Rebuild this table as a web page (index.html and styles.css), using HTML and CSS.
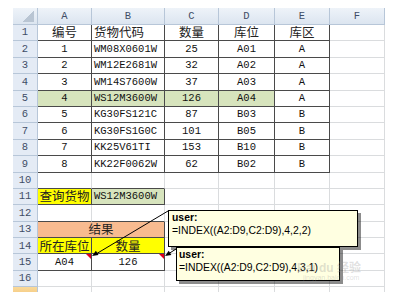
FILE: index.html
```html
<!DOCTYPE html>
<html lang="zh">
<head>
<meta charset="utf-8">
<title>INDEX</title>
<link rel="stylesheet" href="styles.css">
</head>
<body>
<div class="sheet">
  <div class="corner"></div>
  <div class="ch">A</div><div class="ch">B</div><div class="ch">C</div><div class="ch">D</div><div class="ch">E</div><div class="ch">F</div>

  <div class="rh">1</div>
  <div class="c b zh">编号</div><div class="c b zh l">货物代码</div><div class="c b zh">数量</div><div class="c b zh">库位</div><div class="c b zh">库区</div><div class="c"></div>

  <div class="rh">2</div>
  <div class="c b">1</div><div class="c b l">WM08X0601W</div><div class="c b">25</div><div class="c b">A01</div><div class="c b">A</div><div class="c"></div>

  <div class="rh">3</div>
  <div class="c b">2</div><div class="c b l">WM12E2681W</div><div class="c b">32</div><div class="c b">A02</div><div class="c b">A</div><div class="c"></div>

  <div class="rh">4</div>
  <div class="c b">3</div><div class="c b l">WM14S7600W</div><div class="c b">37</div><div class="c b">A03</div><div class="c b">A</div><div class="c"></div>

  <div class="rh">5</div>
  <div class="c b g">4</div><div class="c b g l">WS12M3600W</div><div class="c b g">126</div><div class="c b g">A04</div><div class="c b">A</div><div class="c"></div>

  <div class="rh">6</div>
  <div class="c b">5</div><div class="c b l">KG30FS121C</div><div class="c b">87</div><div class="c b">B03</div><div class="c b">B</div><div class="c"></div>

  <div class="rh">7</div>
  <div class="c b">6</div><div class="c b l">KG30FS1G0C</div><div class="c b">101</div><div class="c b">B05</div><div class="c b">B</div><div class="c"></div>

  <div class="rh">8</div>
  <div class="c b">7</div><div class="c b l">KK25V61TI</div><div class="c b">153</div><div class="c b">B10</div><div class="c b">B</div><div class="c"></div>

  <div class="rh">9</div>
  <div class="c b">8</div><div class="c b l">KK22F0062W</div><div class="c b">62</div><div class="c b">B02</div><div class="c b">B</div><div class="c"></div>

  <div class="rh">10</div>
  <div class="c bb"></div><div class="c bb"></div><div class="c"></div><div class="c"></div><div class="c"></div><div class="c"></div>

  <div class="rh">11</div>
  <div class="c b y zh">查询货物</div><div class="c b g l">WS12M3600W</div><div class="c"></div><div class="c"></div><div class="c"></div><div class="c"></div>

  <div class="rh">12</div>
  <div class="c bb"></div><div class="c bb"></div><div class="c"></div><div class="c"></div><div class="c"></div><div class="c"></div>

  <div class="rh">13</div>
  <div class="c b o zh span2">结果</div><div class="c"></div><div class="c"></div><div class="c"></div><div class="c"></div>

  <div class="rh">14</div>
  <div class="c b y zh">所在库位</div><div class="c b y zh">数量</div><div class="c"></div><div class="c"></div><div class="c"></div><div class="c"></div>

  <div class="rh">15</div>
  <div class="c b note">A04</div><div class="c b note">126</div><div class="c"></div><div class="c"></div><div class="c"></div><div class="c"></div>

  <div class="rh">16</div>
  <div class="c"></div><div class="c"></div><div class="c"></div><div class="c"></div><div class="c"></div><div class="c"></div>

  <div class="rh active"></div>
  <div class="c"></div><div class="c"></div><div class="c"></div><div class="c"></div><div class="c"></div><div class="c"></div>
</div>

<svg class="leaders" width="420" height="292" viewBox="0 0 420 292">
  <line x1="168" y1="211" x2="96" y2="254" stroke="#000" stroke-width="1"/>
  <polygon points="92,256 98.5,255 95.9,250.8" fill="#000"/>
  <line x1="176" y1="249" x2="169" y2="253.5" stroke="#000" stroke-width="1"/>
  <polygon points="165,256 171.4,254.9 168.7,250.7" fill="#000"/>
</svg>

<div class="comment c1">
  <div class="author">user:</div>
  <div>=INDEX((A2:D9,C2:D9),4,2,2)</div>
</div>
<div class="comment c2">
  <div class="author">user:</div>
  <div>=INDEX((A2:D9,C2:D9),4,3,1)</div>
</div>

<div class="watermark">Bai du <span class="wm-zh">经验</span><div class="wm-url">jingyan.baidu.com</div></div>
</body>
</html>
```

FILE: styles.css
```css
html, body {
  margin: 0;
  padding: 0;
  background: #fff;
}
body {
  width: 420px;
  height: 292px;
  overflow: hidden;
  position: relative;
}
.sheet {
  display: grid;
  grid-template-columns: 25px 54px 73px 54px 56px 55px 55px;
  grid-template-rows: 17px repeat(17, 16.4px);
  margin: 8px 0 0 13px;
  width: 372px;
  font-family: "Liberation Mono", "DejaVu Sans Mono", monospace;
  font-size: 10.5px;
  line-height: 1;
  color: #111;
}
.corner, .ch, .rh {
  box-sizing: border-box;
  background: linear-gradient(#eef3f9, #dce5f0);
  border-right: 1px solid #b7c6d8;
  border-bottom: 1px solid #b7c6d8;
  color: #3f4d66;
  display: flex;
  align-items: center;
  justify-content: center;
}
.rh {
  background: #e4ebf5;
}
.rh.active {
  background: linear-gradient(#f9d99a, #f3bb69);
}
.corner {
  position: relative;
}
.corner::after {
  content: "";
  position: absolute;
  right: 3px;
  bottom: 2px;
  width: 11px;
  height: 12px;
  background: linear-gradient(to bottom right, transparent 50%, #b9c5d3 50%);
}
.c {
  box-sizing: border-box;
  border-right: 1px solid #dadcde;
  border-bottom: 1px solid #dadcde;
  display: flex;
  align-items: center;
  justify-content: center;
  white-space: nowrap;
  position: relative;
  line-height: 1;
}
.c.b {
  border-right-color: #4a4a4a;
  border-bottom-color: #4a4a4a;
}
.c.bb {
  border-bottom-color: #4a4a4a;
}
.c.l {
  justify-content: flex-start;
  padding-left: 2px;
}
.zh {
  font-family: "Noto Sans CJK SC", sans-serif;
  font-size: 12.5px;
  font-weight: 400;
  line-height: 1;
  color: #222;
}
.g { background: #d7e4bd; }
.y { background: #ffff00; }
.o { background: #f8bb90; }
.span2 { grid-column: span 2; }
.note::after {
  content: "";
  position: absolute;
  top: 0;
  right: 0;
  border-top: 5px solid #e0001b;
  border-left: 5px solid transparent;
}
.leaders {
  position: absolute;
  left: 0;
  top: 0;
}
.comment {
  position: absolute;
  box-sizing: border-box;
  background: #ffffe1;
  border: 1px solid #000;
  box-shadow: 3px 3px 0 rgba(0, 0, 0, 0.45);
  font-family: "Liberation Sans", Arial, sans-serif;
  font-size: 10.4px;
  line-height: 13px;
  color: #000;
  white-space: nowrap;
}
.author {
  font-weight: bold;
}
.c1 {
  left: 168px;
  top: 210px;
  width: 190px;
  height: 37px;
  padding: 0 0 0 3px;
}
.c2 {
  left: 176px;
  top: 247px;
  width: 164px;
  height: 34px;
  padding: 0 0 0 2px;
}
.watermark {
  position: absolute;
  left: 297px;
  top: 261px;
  font-family: "Liberation Sans", Arial, sans-serif;
  font-size: 12px;
  color: rgba(150, 150, 150, 0.3);
  font-weight: bold;
  line-height: 12px;
}
.wm-zh {
  font-family: "Noto Sans CJK SC", sans-serif;
}
.wm-url {
  font-size: 7px;
  font-weight: normal;
  line-height: 8px;
  padding-left: 6px;
}
```
